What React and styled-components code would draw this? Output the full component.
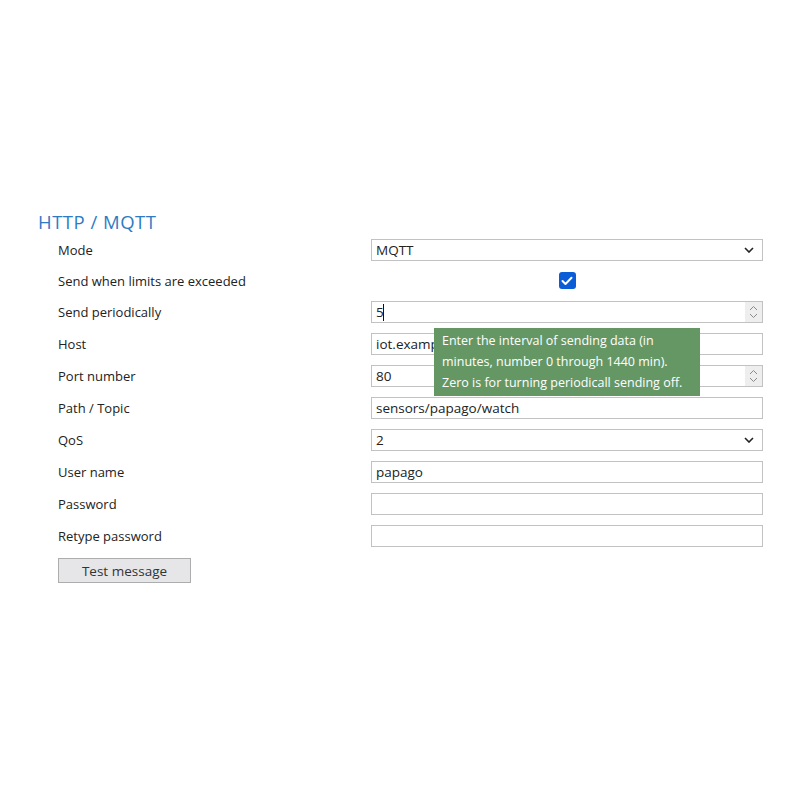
import React from 'react';
import styled, { createGlobalStyle } from 'styled-components';

const GlobalStyle = createGlobalStyle`
  html, body {
    margin: 0;
    padding: 0;
    background: #ffffff;
  }
  body {
    font-family: 'Open Sans', 'Noto Sans', sans-serif;
    color: #222222;
  }
`;

const Page = styled.div`
  width: 800px;
  height: 800px;
  padding: 209px 37px 0 38px;
  box-sizing: border-box;
`;

const Title = styled.h2`
  margin: 0;
  font-weight: 400;
  font-size: 18.5px;
  line-height: 25px;
  letter-spacing: 0.5px;
  color: #2e7bc4;
`;

const Form = styled.div`
  display: flex;
  flex-direction: column;
  padding-left: 20px;
`;

const Row = styled.div`
  display: grid;
  grid-template-columns: 313px 392px;
  align-items: center;
  height: ${props => (props.$compact ? '31px' : '32px')};
  font-size: 13px;
`;

const Label = styled.span`
  color: #222222;
`;

const Field = styled.div`
  position: relative;
  display: flex;
  justify-content: ${props => (props.$center ? 'center' : 'flex-start')};
`;

const TextBox = styled.input`
  box-sizing: border-box;
  width: 392px;
  height: 22px;
  margin: 0;
  padding: 0 4px;
  border: 1px solid #c2c2c2;
  border-radius: 0;
  background: #ffffff;
  font-family: inherit;
  font-size: 13.5px;
  color: #222222;
  outline: none;
  -moz-appearance: textfield;

  &::-webkit-inner-spin-button,
  &::-webkit-outer-spin-button {
    -webkit-appearance: none;
    margin: 0;
  }
`;

const SelectBox = styled.div`
  box-sizing: border-box;
  width: 392px;
  height: 22px;
  display: flex;
  align-items: center;
  justify-content: space-between;
  padding: 0 8px 0 4px;
  border: 1px solid #c2c2c2;
  background: #ffffff;
  font-size: 13.5px;
  color: #222222;
`;

const Spinner = styled.div`
  position: absolute;
  right: 1px;
  top: 1px;
  width: 17px;
  height: 20px;
  background: #eeeeee;
  display: flex;
  align-items: center;
  justify-content: center;
`;

const Caret = styled.span`
  position: absolute;
  left: 12px;
  top: 3px;
  width: 1px;
  height: 17px;
  background: #111111;
`;

const CheckBox = styled.span`
  width: 17px;
  height: 17px;
  border-radius: 3px;
  background: #0b5cd7;
  display: flex;
  align-items: center;
  justify-content: center;
`;

const Tooltip = styled.div`
  position: absolute;
  left: 63px;
  top: 27px;
  z-index: 2;
  width: 266px;
  box-sizing: border-box;
  padding: 2px 8px 3px 8px;
  background: #659765;
  color: #ffffff;
  font-size: 12.5px;
  line-height: 21px;
`;

const Actions = styled.div`
  padding-top: 6px;
`;

const Button = styled.button`
  width: 133px;
  height: 25px;
  border: 1px solid #adadad;
  background: #e6e6e9;
  font-family: inherit;
  font-size: 13.5px;
  color: #333333;
  padding: 0;
`;

const Chevron = () => (
  <svg width="10" height="6" viewBox="0 0 10 6">
    <path d="M1 1 L5 5 L9 1" fill="none" stroke="#222" strokeWidth="1.6" />
  </svg>
);

const SpinArrows = () => (
  <svg width="9" height="14" viewBox="0 0 9 14">
    <path d="M1 5 L4.5 1.5 L8 5" fill="none" stroke="#8a8a8a" strokeWidth="1" />
    <path d="M1 9 L4.5 12.5 L8 9" fill="none" stroke="#8a8a8a" strokeWidth="1" />
  </svg>
);

const Tick = () => (
  <svg width="12" height="10" viewBox="0 0 12 10">
    <path d="M1.5 5 L4.5 8 L10.5 1.8" fill="none" stroke="#fff" strokeWidth="2" strokeLinecap="round" strokeLinejoin="round" />
  </svg>
);

export default function App() {
  return (
    <Page>
      <GlobalStyle />
      <Title>HTTP / MQTT</Title>
      <Form>
        <Row $compact>
          <Label>Mode</Label>
          <Field>
            <SelectBox>
              <span>MQTT</span>
              <Chevron />
            </SelectBox>
          </Field>
        </Row>
        <Row $compact>
          <Label>Send when limits are exceeded</Label>
          <Field $center>
            <CheckBox>
              <Tick />
            </CheckBox>
          </Field>
        </Row>
        <Row>
          <Label>Send periodically</Label>
          <Field>
            <TextBox type="number" defaultValue="5" />
            <Caret />
            <Spinner>
              <SpinArrows />
            </Spinner>
            <Tooltip>
              Enter the interval of sending data (in minutes, number 0 through 1440 min).
              Zero is for turning periodicall sending off.
            </Tooltip>
          </Field>
        </Row>
        <Row>
          <Label>Host</Label>
          <Field>
            <TextBox defaultValue="iot.example.com" />
          </Field>
        </Row>
        <Row>
          <Label>Port number</Label>
          <Field>
            <TextBox type="number" defaultValue="80" />
            <Spinner>
              <SpinArrows />
            </Spinner>
          </Field>
        </Row>
        <Row>
          <Label>Path / Topic</Label>
          <Field>
            <TextBox defaultValue="sensors/papago/watch" />
          </Field>
        </Row>
        <Row>
          <Label>QoS</Label>
          <Field>
            <SelectBox>
              <span>2</span>
              <Chevron />
            </SelectBox>
          </Field>
        </Row>
        <Row>
          <Label>User name</Label>
          <Field>
            <TextBox defaultValue="papago" />
          </Field>
        </Row>
        <Row>
          <Label>Password</Label>
          <Field>
            <TextBox type="password" defaultValue="" />
          </Field>
        </Row>
        <Row>
          <Label>Retype password</Label>
          <Field>
            <TextBox type="password" defaultValue="" />
          </Field>
        </Row>
        <Actions>
          <Button>Test message</Button>
        </Actions>
      </Form>
    </Page>
  );
}
